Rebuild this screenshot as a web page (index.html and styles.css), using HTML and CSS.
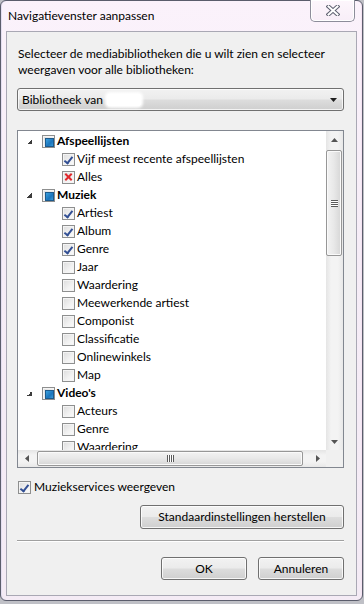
FILE: index.html
```html
<!DOCTYPE html>
<html lang="nl">
<head>
<meta charset="utf-8">
<title>Navigatievenster aanpassen</title>
<link rel="stylesheet" href="styles.css">
</head>
<body>
<div class="window">
  <div class="titlebar">
    <span class="title">Navigatievenster aanpassen</span>
    <div class="close">
      <svg width="14" height="11" viewBox="0 0 14 11">
        <path d="M2.5 1.5 L11.5 9.5 M11.5 1.5 L2.5 9.5" stroke="#5e6070" stroke-width="4" stroke-linecap="square" fill="none"/>
        <path d="M2.5 1.5 L11.5 9.5 M11.5 1.5 L2.5 9.5" stroke="#ffffff" stroke-width="2" stroke-linecap="square" fill="none"/>
      </svg>
    </div>
  </div>
  <div class="client">
    <p class="intro">Selecteer de mediabibliotheken die u wilt zien en selecteer weergaven voor alle bibliotheken:</p>
    <div class="combo">
      <span class="combo-text">Bibliotheek van</span><span class="masked"></span>
      <svg class="combo-arrow" width="7" height="4" viewBox="0 0 7 4"><path d="M0 0 H7 L3.5 4 Z" fill="#1e1e1e"/></svg>
    </div>
    <div class="tree">
      <div class="tree-body">
        <div class="row parent"><span class="expander"></span><span class="cb mixed"></span><span class="label bold">Afspeellijsten</span></div>
        <div class="row child"><span class="cb checked"></span><span class="label">Vijf meest recente afspeellijsten</span></div>
        <div class="row child"><span class="cb excluded"></span><span class="label">Alles</span></div>
        <div class="row parent"><span class="expander"></span><span class="cb mixed"></span><span class="label bold">Muziek</span></div>
        <div class="row child"><span class="cb checked"></span><span class="label">Artiest</span></div>
        <div class="row child"><span class="cb checked"></span><span class="label">Album</span></div>
        <div class="row child"><span class="cb checked"></span><span class="label">Genre</span></div>
        <div class="row child"><span class="cb"></span><span class="label">Jaar</span></div>
        <div class="row child"><span class="cb"></span><span class="label">Waardering</span></div>
        <div class="row child"><span class="cb"></span><span class="label">Meewerkende artiest</span></div>
        <div class="row child"><span class="cb"></span><span class="label">Componist</span></div>
        <div class="row child"><span class="cb"></span><span class="label">Classificatie</span></div>
        <div class="row child"><span class="cb"></span><span class="label">Onlinewinkels</span></div>
        <div class="row child"><span class="cb"></span><span class="label">Map</span></div>
        <div class="row parent"><span class="expander"></span><span class="cb mixed"></span><span class="label bold">Video's</span></div>
        <div class="row child"><span class="cb"></span><span class="label">Acteurs</span></div>
        <div class="row child"><span class="cb"></span><span class="label">Genre</span></div>
        <div class="row child"><span class="cb"></span><span class="label">Waardering</span></div>
      </div>
      <div class="vscroll">
        <div class="sb-btn"><svg width="7" height="4" viewBox="0 0 7 4"><path d="M0 4 H7 L3.5 0 Z" fill="#555"/></svg></div>
        <div class="sb-track v">
          <div class="thumb v-thumb"><span class="grip-v"></span></div>
        </div>
        <div class="sb-btn"><svg width="7" height="4" viewBox="0 0 7 4"><path d="M0 0 H7 L3.5 4 Z" fill="#555"/></svg></div>
      </div>
      <div class="hscroll">
        <div class="sb-btn h"><svg width="4" height="7" viewBox="0 0 4 7"><path d="M4 0 V7 L0 3.5 Z" fill="#555"/></svg></div>
        <div class="sb-track h">
          <div class="thumb h-thumb"><span class="grip-h"></span></div>
        </div>
        <div class="sb-btn h"><svg width="4" height="7" viewBox="0 0 4 7"><path d="M0 0 V7 L4 3.5 Z" fill="#555"/></svg></div>
      </div>
      <div class="corner"></div>
    </div>
    <label class="option"><span class="cb checked"></span><span class="label">Muziekservices weergeven</span></label>
    <div class="reset-row"><button class="btn reset">Standaardinstellingen herstellen</button></div>
    <div class="separator"></div>
    <div class="actions">
      <button class="btn action">OK</button>
      <button class="btn action">Annuleren</button>
    </div>
  </div>
</div>
</body>
</html>
```
FILE: styles.css
```css
* { box-sizing: border-box; }
html, body { margin: 0; padding: 0; }
body {
  width: 364px;
  height: 604px;
  overflow: hidden;
  background: #bfc0c6;
  font-family: Lato, "Open Sans", sans-serif;
  font-size: 12px;
  color: #000;
}
.window {
  width: 363px;
  height: 601px;
  border: 1px solid #5b5d6c;
  border-radius: 6px 6px 6px 6px;
  background: linear-gradient(180deg, #fbf2fb 0%, #f6edf7 40%, #f4ebf5 100%);
  padding: 0 5px 4px 5px;
  display: flex;
  flex-direction: column;
  box-shadow: inset 1px 0 0 #e4def0, inset -1px 0 0 #f6e4f3;
}
.titlebar {
  height: 30px;
  display: flex;
  align-items: flex-start;
  justify-content: space-between;
  position: relative;
}
.title {
  padding: 7px 0 0 2px;
  line-height: 16px;
  color: #000;
}
.close {
  position: absolute;
  right: 2px;
  top: -1px;
  width: 45px;
  height: 22px;
  border: 1px solid #8d8d9a;
  border-top: none;
  border-radius: 0 0 5px 5px;
  background: linear-gradient(180deg, #fdf6fc 0%, #f8eef8 100%);
  box-shadow: inset 0 0 0 1px #ffffff;
  display: flex;
  align-items: center;
  justify-content: center;
}
.client {
  flex: 1;
  border: 1px solid #a9a8b4;
  background: #f0f0f0;
  padding: 14px 12px 0 10px;
  display: flex;
  flex-direction: column;
}
.intro {
  margin: 0 0 0 1px;
  line-height: 16px;
}
.combo {
  margin-top: 10px;
  height: 23px;
  border: 1px solid #707070;
  border-radius: 3px;
  background: linear-gradient(180deg, #f2f2f2 0%, #ebebeb 48%, #dddddd 52%, #cfcfcf 100%);
  box-shadow: inset 0 0 0 1px rgba(255,255,255,.75);
  display: flex;
  align-items: center;
  padding-left: 4px;
  padding-right: 6px;
}
.combo-text { line-height: 16px; }
.masked {
  width: 34px;
  height: 12px;
  margin-left: 4px;
  background: #ffffff;
  border-radius: 3px;
  box-shadow: 0 0 3px 2px #ffffff;
}
.combo-arrow { margin-left: auto; }
.tree {
  margin-top: 19px;
  height: 338px;
  border: 1px solid #828790;
  background: #fff;
  display: grid;
  grid-template-columns: 1fr 17px;
  grid-template-rows: 1fr 17px;
  overflow: hidden;
}
.tree-body {
  overflow: hidden;
  padding-top: 1px;
}
.row {
  height: 18px;
  display: flex;
  align-items: center;
  white-space: nowrap;
}
.row.parent { padding-left: 9px; }
.row.child { padding-left: 44px; }
.expander {
  width: 5px;
  height: 5px;
  margin-right: 10px;
  background: linear-gradient(135deg, transparent 50%, #3c3c3c 50%);
}
.label { line-height: 16px; padding-left: 2px; }
.bold { font-weight: 700; }
.cb {
  flex: none;
  width: 13px;
  height: 13px;
  border: 1px solid #8e8f8f;
  background: linear-gradient(135deg, #dcdcdc 0%, #f2f2f2 60%, #fcfcfc 100%);
  box-shadow: inset 0 0 0 1px #f4f4f4;
  position: relative;
}
.cb.checked::after {
  content: "";
  position: absolute;
  left: 3px;
  top: 1px;
  width: 3px;
  height: 7px;
  border-right: 2px solid #324f94;
  border-bottom: 2px solid #324f94;
  transform: rotate(38deg);
}
.cb.mixed::after {
  content: "";
  position: absolute;
  left: 2px;
  top: 2px;
  width: 7px;
  height: 7px;
  border: 1px solid #1d5a8c;
  background: linear-gradient(135deg, #3aa0dd 0%, #1c75bc 60%, #3a9ad8 100%);
}
.cb.excluded::before,
.cb.excluded::after {
  content: "";
  position: absolute;
  left: 1px;
  top: 4.5px;
  width: 9px;
  height: 2px;
  background: #e0282c;
  transform: rotate(45deg);
}
.cb.excluded::after { transform: rotate(-45deg); }
.vscroll {
  display: flex;
  flex-direction: column;
  background: linear-gradient(90deg, #e5e5e5 0%, #f3f3f3 30%, #f3f3f3 70%, #e8e8e8 100%);
}
.sb-btn {
  flex: none;
  height: 17px;
  display: flex;
  align-items: center;
  justify-content: center;
}
.sb-btn.h { width: 17px; height: auto; }
.sb-track { flex: 1; display: flex; }
.sb-track.v { flex-direction: column; padding: 2px 1px 0 0; }
.thumb {
  border: 1px solid #979797;
  border-radius: 2px;
  display: flex;
  align-items: center;
  justify-content: center;
}
.v-thumb {
  height: 106px;
  background: linear-gradient(90deg, #f3f3f3 0%, #e8e8e8 50%, #d6d6d6 100%);
  box-shadow: inset 0 0 0 1px #fafafa;
}
.grip-v {
  width: 7px;
  height: 7px;
  background: repeating-linear-gradient(180deg, #5a5a5a 0 1px, #fff 1px 2px);
}
.hscroll {
  display: flex;
  background: linear-gradient(180deg, #e5e5e5 0%, #f3f3f3 30%, #f3f3f3 70%, #e8e8e8 100%);
}
.sb-track.h { padding: 1px 6px 1px 2px; }
.h-thumb {
  flex: 1;
  background: linear-gradient(180deg, #f3f3f3 0%, #e8e8e8 50%, #d6d6d6 100%);
  box-shadow: inset 0 0 0 1px #fafafa;
}
.grip-h {
  width: 7px;
  height: 7px;
  background: repeating-linear-gradient(90deg, #5a5a5a 0 1px, #fff 1px 2px);
}
.corner { background: #f0f0f0; }
.option {
  margin-top: 11px;
  height: 16px;
  display: flex;
  align-items: center;
  padding-left: 1px;
}
.option .label { padding-left: 3px; }
.reset-row {
  margin-top: 10px;
  display: flex;
  justify-content: flex-end;
}
.btn {
  font: inherit;
  color: #000;
  border: 1px solid #707070;
  border-radius: 3px;
  background: linear-gradient(180deg, #f2f2f2 0%, #ebebeb 48%, #dddddd 52%, #cfcfcf 100%);
  box-shadow: inset 0 0 0 1px rgba(255,255,255,.8);
  padding: 0;
  line-height: 16px;
}
.reset { width: 204px; height: 24px; }
.separator {
  margin-top: 11px;
  height: 2px;
  border-top: 1px solid #a0a0a0;
  border-bottom: 1px solid #ffffff;
}
.actions {
  margin-top: 15px;
  display: flex;
  justify-content: flex-end;
  gap: 11px;
}
.action { width: 86px; height: 23px; }
```
